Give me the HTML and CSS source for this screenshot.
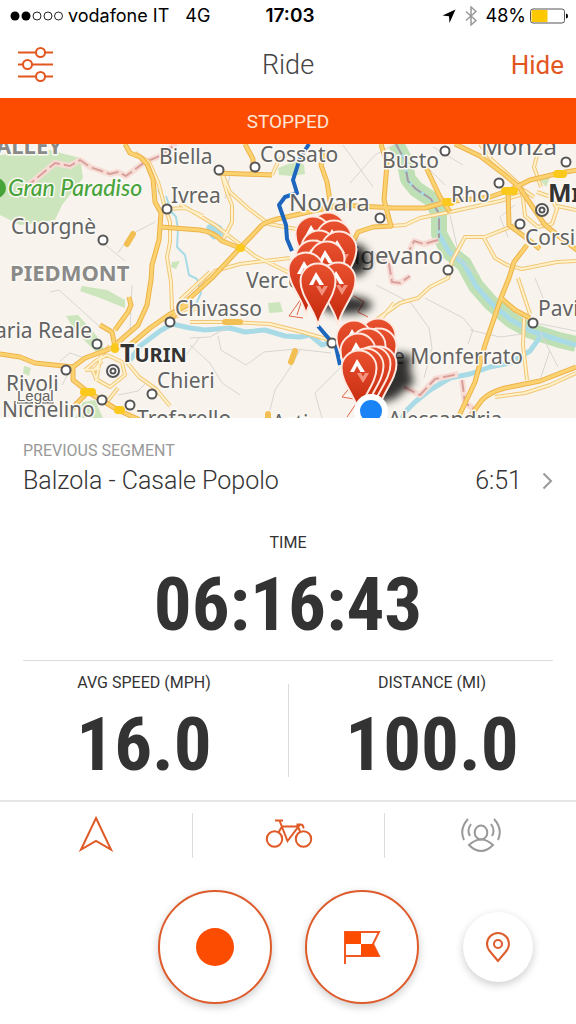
FILE: index.html
```html
<!DOCTYPE html>
<html lang="en">
<head>
<meta charset="utf-8">
<meta name="viewport" content="width=device-width, initial-scale=1">
<title>Ride</title>
<link rel="stylesheet" href="styles.css">
</head>
<body>
<div class="screen">
  <div class="status">
    <div class="status-left">
      <svg class="signal" viewBox="0 0 54 12" aria-hidden="true">
        <circle cx="5" cy="6" r="4.500"/><circle cx="16" cy="6" r="4.500"/>
        <g class="hollow"><circle cx="27" cy="6" r="4"/><circle cx="38" cy="6" r="4"/><circle cx="48.500" cy="6" r="4"/></g>
      </svg>
      <span>vodafone IT</span>
      <span class="network">4G</span>
    </div>
    <div class="clock">17:03</div>
    <div class="status-right">
      <svg class="locate" viewBox="0 0 14 14" aria-hidden="true"><path d="M13.500 0.500 7.500 14 7 7.200 0.500 6.500Z"/></svg>
      <svg class="bluetooth" viewBox="0 0 12 20" aria-hidden="true"><path d="M1 5.500 11 14.500 6 19V1l5 4.500L1 14.500"/></svg>
      <span>48%</span>
      <svg class="battery" viewBox="0 0 38 16" aria-hidden="true"><rect class="case" x="0.500" y="1" width="34" height="14" rx="2.500"/><rect class="charge" x="1.500" y="2" width="16" height="12" rx="1"/><path d="M36 5.500q2 0 2 2.500t-2 2.500Z"/></svg>
    </div>
  </div>

  <header class="nav">
    <button class="nav-settings" aria-label="Settings">
      <svg class="sliders" viewBox="0 0 36 36" aria-hidden="true"><path d="M0 5.500h18M27 5.500h8M0 17.500h5M14 17.500h21M0 29.500h18M27 29.500h8"/><circle cx="22.500" cy="5.500" r="4.500"/><circle cx="9.500" cy="17.500" r="4.500"/><circle cx="22.500" cy="29.500" r="4.500"/></svg>
    </button>
    <h1 class="title">Ride</h1>
    <button class="nav-hide">Hide</button>
  </header>

  <div class="banner" role="status">STOPPED</div>

  <svg class="map" viewBox="0 144 576 274" preserveAspectRatio="xMidYMid slice" role="img" aria-label="Route map">
    <defs>
      <linearGradient id="red" x1="0" y1="0" x2="0" y2="1"><stop offset="0" stop-color="#e9512f"/><stop offset="1" stop-color="#c2260b"/></linearGradient>
      <filter id="soft" x="-50%" y="-50%" width="200%" height="200%"><feGaussianBlur stdDeviation="4"/></filter>
      <g id="pin">
        <path class="pin-body" d="M0 45C-2 30-17.500 16-17.500 0a17.500 17.500 0 0 1 35 0C17.500 16 2 30 0 45Z"/>
        <path class="pin-mark" d="M-9 4-2-9 6 4H1.500L-2-2-5 4Z"/>
        <path class="pin-mark-low" d="M-2 5H2L4 8.500 6 5h4L4 15Z"/>
      </g>
      <path id="a5" d="M125 144l5 9 10 4 7 7 6 15 2 23 6 11-2 27-7 25-1 15-4 25-9 20-23 20"/>
      <path id="a4" d="M170 320l20-22 22-20 28-30 22-23q8-5 20-7l58-13 55 3h30l21-6 44-5 20-7 20-10 30-7 18-3"/>
      <path id="tangenziale" d="M0 354l20 3 15 6 38 4 12-9 30-11 15-2 20-17 20-14 20-10M73 367v13l15 12 30 18 22 10M88 392l-13 13-9 14M100 325l12 7 3 15 15-2M115 330l13-18 3-7-2-8"/>
      <path id="east" d="M455 144l25 12 25 19 14 12 26 38 15 12 18 14M508 190l1 35 16 12 15 12M527 245l-13 17-5 16-8 20-16 47-10 37-17 36M501 298l14 12 15 8M576 367l-36 14-35 7q-15 4-23 12l-14 19"/>
      <path id="north" d="M245 144l8 15v14M218 173l54 2M381 144l6 20-3 36 7 26-18 1-15 5-9 18M425 165l7 15 8 17 10 15M327 150l-6 15 6 17 4 25M161 227l39 3q14 2 22 11l18 7"/>
      <path id="small" d="M135 153l14 9 9 20 6 22 6 18v20l-3 15 4 25 1 28M168 209l17-1 18 8M222 173l8 19 19 17 20 15 27 5M222 175l5 18 5 12v17l-10 20M180 204l35 21 40 31 45 22M200 288l15-17 25-7 50-6M272 175l7-15 12-8M180 300l30-28M376 320l24-17 18-5 12-11 18-9 4-17 13-24h20l30-12M484 238l11 20 12 7 15 4 35-7 19-1M518 278l12 36M524 318l-1 27 4 35M576 373l-26 12-25 8-30 4M390 226l15-1 15-7 30-6 50-11 20-6M480 144l12 16 27 24 4 14 2 18 13 11 14-3 5-15-6-12-14-5M519 187l15 10M540 144l-6 23 7 20M576 210l-19-4M190 322h40l40 2 32 8 28 8 12 12M85 370l12-10 10-5 15 7 3 13-15 12-14-8-3-8 9-10M85 370l15-1M118 388l-12 15M125 360l14 17 17 12 14 17M110 346l-9 9-5 26M376 325l18-22M205 305l-33 13"/>
    </defs>
    <rect class="land" x="0" y="144" width="576" height="274"/>
    <g class="woods">
      <path d="M0 155 50 150 80 158 83 178 62 205 55 220 20 225 0 215Z"/>
      <path d="M82 286l25 4 18 10v8l-25-10-20-7ZM66 316l12-1 18 20 8 14-6 5-22-22ZM172 262l8-1-4 8-5-2ZM278 168l20-8 6 5 1 9-12 2-14-1ZM268 303l12-1 3 10-14 1ZM24 366l7 2-2 8-6-3ZM83 402l12-2 8 18H75ZM540 180l10-3-4 10Z"/>
    </g>
    <g class="valley"><path d="M396 144l8 15 4 20 8 10 15 10 8 15v20l10 18 15 12 12 22 15 17 20 17 20 11 28 9 17 4"/></g>
    <g class="water">
      <path class="narrows" d="M396 144l8 15 4 22 8 8 15 10 8 15v20"/>
      <path d="M439 234l10 18 15 12 12 22 15 17 20 17 20 11 28 9 17 5"/>
      <path d="M130 360l10-14 20-15 12-7 18 4 15 2 25-2 15 4 20-2 20 6 15 1 10-2 12 10 10-3"/>
      <path d="M540 337l-10 14-20 12-20 4-20 7-20 4-20 12-15 12-10 10-5 12"/>
      <path class="stream" d="M158 190l8 15 10 12 2 12-1 18 8 8 4 20 8 4 4 14-5 11M166 196l6 18"/>
      <path class="lake" d="M209 227l5-2 6 3 1 6-7 3-5-5Z"/>
    </g>
    <g class="lanes"><path d="M155 222l-25 13-12 18M103 243l22 18M50 292l9-2 40 36M230 175l-5 24M190 338l20-1 18-10M218 336l3 14 25 15 18-13 32-3 35 4M300 350l-10 18-15 22-5 20M340 368l-25 25 7 25M190 345l20 18 12 20 18 12M343 145l30 42M350 183l25-28 20-11M376 285l35 18 18 25 3 20-8 30M425 298l38 20 10 12-5 14M470 330l30 7 23-3M540 332l18 35M530 322l46 9M550 350l-10 30M450 215l10 45 18 15M425 165l20 20M515 205l-15 12 8 20M85 358l-15-5-10 8M70 370l-8 15M118 395l20-4 10-10M186 355l14-18M535 278l12 30M433 147l30 18M130 330l2-45"/></g>
    <g class="border"><path class="halo" d="M25 188 55 163 70 166 80 160 90 167 110 174 118 172 126 176 145 162 160 156 176 144M404 387l16 8 15-16 23-5M438 240l-14 4-10-3-6 12M376 253l13 11 3 18 8 1 10-7M462 380l3 23 12 8"/><path class="dash" d="M25 188 55 163 70 166 80 160 90 167 110 174 118 172 126 176 145 162 160 156 176 144M404 387l16 8 15-16 23-5M438 240l-14 4-10-3-6 12M376 253l13 11 3 18 8 1 10-7M462 380l3 23 12 8"/><path class="ridge" d="M396 144l8 15 4 22 8 8 15 10 8 15v24"/></g>
    <g class="small-edge"><use href="#small"/></g>
    <g class="small-fill"><use href="#small"/></g>
    <g class="road-edge"><use href="#a5"/><use href="#north"/><use href="#a4"/><use href="#tangenziale"/><use href="#east"/></g>
    <g class="road-fill"><use href="#a5"/><use href="#north"/><use href="#a4"/><use href="#tangenziale"/><use href="#east"/></g>
    <path class="tunnel" d="M133 234l-6 10M295 351l-4 11M225 322h15M268 414v4"/>
    <path class="junction" d="M505 191h9M557 174h6M446 202h5M84 392h8M115 347v2M118 410h3M240 248h1"/>
    <g class="trace"><path d="M301 299l-12 17 14 2M305 290l-8 25M352 385l-10 12 12 2M362 395l-15 22M354 296l10 6-6 10 10 5"/></g>
    <g class="route"><path d="M309 144l-9 14-7 22 4 13-12 4-6 8 7 20 1 14 5 12M318 326l18 21 4 18"/></g>

    <g class="towns">
      <circle cx="219" cy="170" r="4.500"/><circle cx="255" cy="167" r="4.500"/><circle cx="167" cy="209" r="4.500"/><circle cx="103" cy="240" r="4.500"/><circle cx="445" cy="151" r="4.500"/><circle cx="566" cy="162" r="4.500"/><circle cx="499" cy="183" r="4.500"/><circle cx="380" cy="218" r="4.500"/><circle cx="520" cy="224" r="4.500"/><circle cx="448" cy="270" r="4.500"/><circle cx="533" cy="323" r="4.500"/><circle cx="170" cy="322" r="4.500"/><circle cx="97" cy="344" r="4.500"/><circle cx="66" cy="370" r="4.500"/><circle cx="102" cy="400" r="4.500"/><circle cx="130" cy="405" r="4.500"/><circle cx="152" cy="394" r="4.500"/><circle cx="332" cy="343" r="4.500"/>
      <circle cx="542" cy="210" r="6"/><circle cx="542" cy="210" r="2.500"/><circle cx="113" cy="371" r="6"/><circle cx="113" cy="371" r="2.500"/>
    </g>
    <circle class="park-dot" cx="-4" cy="188" r="10"/>
    <g class="labels">
      <text x="159" y="164">Biella</text><text x="260" y="162">Cossato</text><text x="382" y="168">Busto</text>
      <text x="481" y="155" class="town-large">Monza</text><text x="451" y="202">Rho</text>
      <text x="171" y="203">Ivrea</text><text x="11" y="234">Cuorgnè</text>
      <text x="289" y="211" class="town-large">Novara</text><text x="525" y="245">Corsico</text>
      <text x="443" y="264" text-anchor="end" class="town-large">Vigevano</text><text x="246" y="288">Vercelli</text>
      <text x="175" y="316">Chivasso</text><text x="538" y="316">Pavia</text>
      <text x="92" y="338" text-anchor="end">Venaria Reale</text>
      <text x="523" y="364" text-anchor="end">Casale Monferrato</text>
      <text x="157" y="388">Chieri</text><text x="6" y="391">Rivoli</text><text x="2" y="417">Nichelino</text>
      <text x="137" y="426">Trofarello</text><text x="272" y="430">Asti</text><text x="388" y="427">Alessandria</text>
      <text x="8" y="196" class="park">Gran Paradiso</text>
      <text x="10" y="281" class="region">PIEDMONT</text><text x="62" y="154" class="region" text-anchor="end">AOSTA VALLEY</text>
      <text x="120" y="362" class="city">T<tspan class="city-caps">URIN</tspan></text><text x="548" y="202" class="city">M<tspan class="city-caps">ILAN</tspan></text>
      <text x="17" y="401" class="legal">Legal</text>
    </g>

    <g class="shadows" filter="url(#soft)"><ellipse cx="356" cy="260" rx="13" ry="16"/><ellipse cx="346" cy="305" rx="26" ry="9"/><path d="M362 408l20-25 10-30 20 2-2 14 4 14-20 16Z"/></g>
    <use href="#pin" x="328" y="230"/><use href="#pin" x="313" y="234"/><use href="#pin" x="334" y="238"/><use href="#pin" x="319" y="248"/><use href="#pin" x="339" y="249"/><use href="#pin" x="313" y="258"/><use href="#pin" x="327" y="259"/><use href="#pin" x="306" y="270"/><use href="#pin" x="338" y="280"/><use href="#pin" x="318" y="281"/>
    <use href="#pin" x="378" y="336"/><use href="#pin" x="354" y="338"/><use href="#pin" x="379" y="346"/><use href="#pin" x="368" y="346"/><use href="#pin" x="358" y="351"/><use href="#pin" x="379" y="364"/><use href="#pin" x="373" y="364"/><use href="#pin" x="366" y="366"/><use href="#pin" x="359" y="368"/>
    <circle class="me-ring" cx="371" cy="411" r="17"/><circle class="me" cx="371" cy="411" r="11"/>
  </svg>

  <main>
    <button class="segment">
      <span class="segment-label">PREVIOUS SEGMENT</span>
      <span class="segment-row">
        <span class="segment-name">Balzola - Casale Popolo</span>
        <span>6:51</span>
        <svg class="chevron" viewBox="0 0 11 18" aria-hidden="true"><path d="M1.500 1.500 9 9l-7.500 7.500"/></svg>
      </span>
    </button>
    <section class="stat stat-time"><h2 class="stat-label">TIME</h2><p class="stat-value">06:16:43</p></section>
    <div class="stat-pair">
      <section class="stat"><h2 class="stat-label">AVG SPEED (MPH)</h2><p class="stat-value">16.0</p></section>
      <section class="stat"><h2 class="stat-label">DISTANCE (MI)</h2><p class="stat-value">100.0</p></section>
    </div>
  </main>

  <nav class="tabs">
    <button class="tab" aria-label="Navigation"><svg class="tab-icon" viewBox="0 0 48 40" aria-hidden="true"><path d="M24 5 39 36.500 24 28 9 36.500Z"/></svg></button>
    <button class="tab" aria-label="Activity type"><svg class="tab-icon" viewBox="0 0 48 40" aria-hidden="true"><circle cx="9.500" cy="26" r="7.700"/><circle cx="38.500" cy="26" r="7.700"/><path d="M10 7.500h8M14.500 7.500 22.500 28 33.500 13.500H17L13.500 19.500M31.500 11.500h4q3 0 3 4M32 11.500 35.500 19.500"/></svg></button>
    <button class="tab tab-muted" aria-label="Beacon"><svg class="tab-icon" viewBox="0 0 48 40" aria-hidden="true"><ellipse cx="24" cy="19.500" rx="6.300" ry="7"/><path d="M12 32q12-11 24 0-12 12-24 0ZM11 6q-9 10-4 21M37 6q9 10 4 21M14 11q-4.500 6-1 12M34 11q4.500 6 1 12"/></svg></button>
  </nav>

  <div class="actions">
    <button class="round" aria-label="Record"><svg class="record" viewBox="0 0 38 38" aria-hidden="true"><circle cx="19" cy="19" r="19"/></svg></button>
    <button class="round" aria-label="Finish"><svg class="flag" viewBox="0 0 38 34" aria-hidden="true"><path class="flag-line" d="M2 34V2h34l-6 12 6 12H2"/><path d="M2 2h16v12H2ZM18 14h12l6 12H18Z"/></svg></button>
    <button class="round round-small" aria-label="Segments nearby"><svg class="place" viewBox="0 0 26 32" aria-hidden="true"><path d="M13 30 5.500 21Q2 17 2 13a11 11 0 0 1 22 0q0 4-3.500 8Z"/><circle cx="13" cy="13" r="4"/></svg></button>
  </div>
</div>
</body>
</html>
```
FILE: styles.css
```css
* { box-sizing: border-box; }
body { margin: 0; background: #fff; color: #333; font-family: Roboto, "Liberation Sans", sans-serif; }
h1, h2, p { margin: 0; font-weight: inherit; }
button { margin: 0; padding: 0; border: 0; background: none; color: inherit; font: inherit; cursor: pointer; }
svg { display: block; flex: none; }
.screen { display: flex; flex-direction: column; min-height: 100vh; }

.status { display: grid; grid-template-columns: 1fr auto 1fr; align-items: center; height: 32px; padding: 0 8px; color: #000; font: 18px/32px Inter, sans-serif; }
.status-left, .status-right { display: flex; align-items: center; gap: 4px; }
.status-right { justify-content: flex-end; }
.network { margin-left: 12px; }
.clock { padding-left: 4px; font-weight: 600; font-size: 19px; }
.signal { width: 54px; height: 12px; margin-left: 2px; }
.hollow { fill: none; stroke: #222; }
.locate { width: 14px; height: 14px; }
.bluetooth { width: 14px; height: 20px; margin: 0 4px; fill: none; stroke: #999; stroke-width: 1.500; }
.battery { width: 38px; height: 16px; }
.case { fill: #fff; stroke: #555; }
.charge { fill: #ffc800; }

.nav { display: grid; grid-template-columns: 1fr auto 1fr; align-items: center; height: 66px; padding: 0 12px; }
.nav-settings { justify-self: start; padding-left: 6px; }
.sliders { width: 36px; height: 36px; fill: none; stroke: #e2561f; stroke-width: 2; }
.title { color: #444; font-size: 27px; font-weight: 300; }
.nav-hide { justify-self: end; color: #e2561f; font-size: 26px; }

.banner { height: 46px; background: #fc4c02; color: #ffe6d5; font-size: 19px; line-height: 47px; text-align: center; }

.map { width: 100%; height: auto; aspect-ratio: 576 / 274; fill: none; stroke-linejoin: round; }
.land { fill: #f8f4ed; }
.woods { fill: #cde5bd; }
.valley { stroke: #bfe0b5; stroke-width: 16; }
.water { stroke: #a9dbe6; stroke-width: 5; }
.narrows { stroke-width: 3; }
.stream { stroke-width: 2; }
.lake { fill: #a9dbe6; }
.lanes { stroke: #d9d5d2; stroke-width: 1; }
.halo { stroke: #f7dcd6; stroke-width: 6; }
.dash { stroke: #d9a09b; stroke-width: 2; stroke-dasharray: 12 4; }
.ridge { stroke: #a99c9d; stroke-width: 2; stroke-dasharray: 12 3; }
.small-edge { stroke: #f2c677; stroke-width: 4; }
.small-fill { stroke: #fff1c9; stroke-width: 2; }
.road-edge { stroke: #eeb24a; stroke-width: 5; }
.road-fill { stroke: #fbd270; stroke-width: 3; }
.tunnel { stroke: #f2bf52; stroke-width: 6; stroke-linecap: round; }
.junction { stroke: #fbc91c; stroke-width: 8; stroke-linecap: round; }
.trace { stroke: #e2664a; stroke-width: 1; }
.route { stroke: #1d66bd; stroke-width: 4; }
.towns { fill: #fff; stroke: #555; stroke-width: 2; }
.park-dot { fill: #46a338; }
.labels { font-family: "Noto Sans", sans-serif; font-size: 21px; fill: #636363; stroke: #fbf9f4; stroke-width: 3; paint-order: stroke; }
.town-large { font-size: 24px; }
.park { font-family: Lato, "Noto Sans", sans-serif; font-size: 23px; font-style: italic; font-weight: 500; fill: #49a43c; }
.region { font-size: 22px; font-weight: 700; fill: #8a8a88; }
.city { font-size: 25px; font-weight: 700; fill: #333; }
.city-caps { font-size: 20px; }
.legal { font-family: "Liberation Sans", sans-serif; font-size: 15px; text-decoration: underline; }
.shadows { fill: #000; opacity: 0.8; }
.pin-body { fill: url(#red); stroke: #ffe9e1; stroke-width: 2; }
.pin-mark { fill: #fff; }
.pin-mark-low { fill: #f4917c; }
.me-ring { fill: #fff; }
.me { fill: #1a84f7; }

.segment { display: block; width: 100%; padding: 21px 23px 0; text-align: left; }
.segment-label { display: block; color: #999; font-size: 16px; line-height: 24px; }
.segment-row { display: flex; align-items: center; gap: 20px; font-size: 25px; font-weight: 300; line-height: 36px; }
.segment-name { flex: 1; }
.chevron { width: 11px; height: 18px; fill: none; stroke: #999; stroke-width: 2; }
.stat { padding: 10px 0 17px; text-align: center; }
.stat-time { margin: 0 23px; padding-top: 32px; border-bottom: 1px solid #dcdcdc; }
.stat-label { font-size: 16px; line-height: 24px; }
.stat-value { padding-top: 11px; font-family: "Roboto Condensed", "DejaVu Sans Condensed", sans-serif; font-size: 75px; font-weight: 700; line-height: 77px; }
.stat-pair { position: relative; display: grid; grid-template-columns: 1fr 1fr; }
.stat-pair::after { content: ""; position: absolute; top: 23px; bottom: 23px; left: 50%; border-left: 1px solid #dcdcdc; }

.tabs { display: grid; grid-template-columns: repeat(3, 1fr); padding: 11px 0; border-top: 2px solid #e5e5e5; }
.tab { display: flex; justify-content: center; height: 45px; color: #df5a27; }
.tab + .tab { border-left: 1px solid #dcdcdc; }
.tab-muted { color: #999; }
.tab-icon { width: 48px; height: 40px; fill: none; stroke: currentColor; stroke-width: 2; }

.actions { display: flex; justify-content: flex-end; align-items: center; gap: 33px; padding: 21px 43px 20px 0; }
.round { display: flex; justify-content: center; align-items: center; width: 114px; height: 114px; border: 2px solid #de5b2b; border-radius: 50%; background: #fff; box-shadow: 0 3px 8px #0003; }
.round-small { width: 70px; height: 70px; margin-left: 11px; border: 0; }
.record { width: 38px; height: 38px; fill: #fc4c02; }
.flag { width: 38px; height: 34px; fill: #fc4c02; }
.flag-line { fill: none; stroke: #f15a22; stroke-width: 2; }
.place { width: 26px; height: 32px; fill: none; stroke: #de5b2b; stroke-width: 2; }
```
